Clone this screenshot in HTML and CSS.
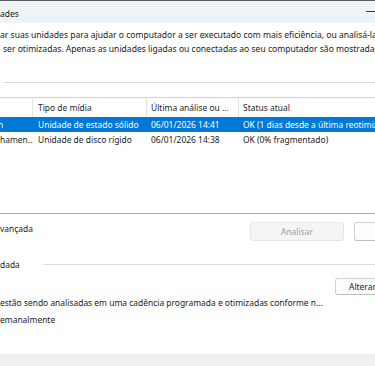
FILE: index.html
```html
<!DOCTYPE html>
<html lang="pt-BR">
<head>
<meta charset="utf-8">
<title>Otimizar Unidades</title>
<link rel="stylesheet" href="styles.css">
</head>
<body>
<div class="window">
  <div class="titlebar">
    <span class="title">ades</span>
    <span class="min"></span>
  </div>
  <div class="desc">
    <div class="line">ar suas unidades para ajudar o computador a ser executado com mais eficiência, ou analisá-las para descobrir se elas precisam</div>
    <div class="line line2">ser otimizadas. Apenas as unidades ligadas ou conectadas ao seu computador são mostradas.</div>
  </div>
  <div class="group group-status">
    <span class="rule"></span>
  </div>
  <div class="list">
    <div class="row head">
      <div class="cell c1"></div>
      <div class="cell c2">Tipo de mídia</div>
      <div class="cell c3">Última análise ou ...</div>
      <div class="cell c4">Status atual</div>
    </div>
    <div class="row sel">
      <div class="cell c1"><span class="clip">n</span></div>
      <div class="cell c2">Unidade de estado sólido</div>
      <div class="cell c3">06/01/2026 14:41</div>
      <div class="cell c4">OK (1 dias desde a última reotimização)</div>
    </div>
    <div class="row">
      <div class="cell c1">hamen...</div>
      <div class="cell c2">Unidade de disco rígido</div>
      <div class="cell c3">06/01/2026 14:38</div>
      <div class="cell c4">OK (0% fragmentado)</div>
    </div>
  </div>
  <div class="actions">
    <span class="adv">vançada</span>
    <button class="btn disabled">Analisar</button>
    <button class="btn">Otimizar</button>
  </div>
  <div class="group group-sched">
    <span class="glabel">dada</span>
    <span class="rule"></span>
  </div>
  <div class="change-row">
    <button class="btn btn-change">Alterar configurações</button>
  </div>
  <div class="info info1">estão sendo analisadas em uma cadência programada e otimizadas conforme n...</div>
  <div class="info info2">emanalmente</div>
  <div class="footer"></div>
</div>
</body>
</html>
```
FILE: styles.css
```css
html, body {
  margin: 0;
  padding: 0;
}
body {
  width: 375px;
  height: 366px;
  overflow: hidden;
  background: #fff;
  font-family: "Noto Sans", "Open Sans", sans-serif;
  font-size: 8.45px;
  color: #1a1a1a;
}
.window {
  border-top: 1px solid #5e5e5e;
  height: 365px;
  display: flex;
  flex-direction: column;
}
.titlebar {
  height: 20px;
  padding-top: 2px;
  background: #eef3f8;
  display: flex;
  align-items: center;
  justify-content: space-between;
}
.title {
  color: #1a1a1a;
}
.min {
  align-self: flex-start;
  margin-top: 8px;
  width: 9px;
  height: 1px;
  background: #3a3a3a;
}
.desc {
  margin-top: 5px;
}
.line {
  line-height: 14px;
  white-space: nowrap;
  overflow: hidden;
  font-size: 8.55px;
}
.line2 {
  padding-left: 3px;
}
.group {
  height: 14px;
  display: flex;
  align-items: center;
  white-space: nowrap;
}
.group-status {
  margin-top: 19px;
}
.group-status .rule {
  margin-left: 3px;
}
.rule {
  flex: 1;
  height: 1px;
  background: #dcdcdc;
}
.glabel {
  width: 43px;
  flex-shrink: 0;
}
.list {
  margin-top: 8px;
  height: 117px;
  box-sizing: border-box;
  border-top: 1px solid #cfcfcf;
  border-bottom: 1px solid #a8a8a8;
}
.row {
  display: grid;
  grid-template-columns: 33px 114px 92px 1fr;
  height: 15px;
  align-items: center;
}
.row.head {
  height: 19px;
  color: #262626;
}
.cell {
  white-space: nowrap;
  overflow: hidden;
  padding-left: 4px;
  line-height: 15px;
}
.head .cell {
  height: 19px;
  line-height: 19px;
  box-sizing: border-box;
  border-right: 1px solid #e3e3e3;
}
.head .c4 {
  border-right: none;
}
.c1 {
  padding-left: 0;
}
.c2 {
  padding-left: 5px;
}
.row.sel {
  background: #0078d7;
  color: #fff;
}
.clip {
  display: inline-block;
  margin-left: -2px;
}
.actions {
  margin-top: 8px;
  margin-right: -73px;
  display: flex;
  align-items: flex-start;
  gap: 10px;
}
.adv {
  flex: 1;
  line-height: 14px;
  white-space: nowrap;
}
.btn {
  flex-shrink: 0;
  box-sizing: border-box;
  width: 94px;
  height: 19px;
  padding: 0;
  font: inherit;
  color: #1a1a1a;
  background: #fdfdfd;
  border: 1px solid #d0d0d0;
  border-bottom-color: #bdbdbd;
  border-radius: 3px;
}
.btn.disabled {
  background: #f5f5f5;
  border-color: #e6e6e6;
  color: #a0a0a0;
}
.group-sched {
  margin-top: 16px;
}
.change-row {
  margin-top: 7px;
  margin-right: -72px;
  display: flex;
  justify-content: flex-end;
}
.btn-change {
  width: 112px;
  height: 17px;
  text-align: left;
  padding-left: 13px;
  white-space: nowrap;
}
.info {
  line-height: 14px;
  white-space: nowrap;
  overflow: hidden;
}
.info1 {
  margin-top: 1px;
}
.info2 {
  margin-top: 3px;
}
.footer {
  margin-top: auto;
  height: 12px;
  background: #f0f0f0;
}
```
